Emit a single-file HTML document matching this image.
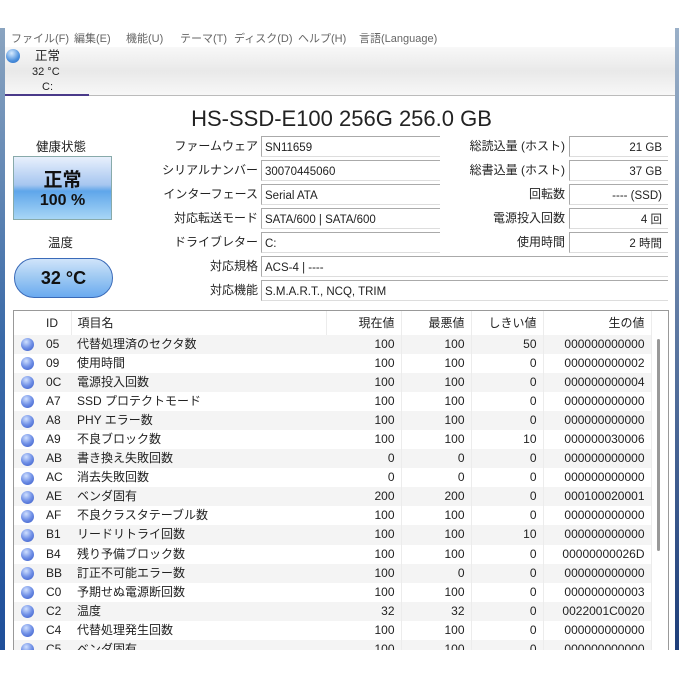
<!DOCTYPE html>
<html><head><meta charset="utf-8"><style>
*{margin:0;padding:0;box-sizing:border-box}
body{width:679px;height:679px;background:#fff;position:relative;overflow:hidden;font-family:"Liberation Sans","Noto Sans CJK JP",sans-serif;color:#222;font-size:12px}
.a{position:absolute;white-space:nowrap;line-height:14px}
.menu{top:32px;font-size:11px;color:#666}
.lbl{text-align:right;font-size:12px}
.box{position:absolute;height:21px;border-top:1px solid #aaa;border-left:1px solid #aaa;border-bottom:1px solid #ddd;font-size:11.5px;line-height:20px;padding:1px 3px 0}
.r{text-align:right;padding-right:6px}
table{border-collapse:collapse;font-size:12px;table-layout:fixed}
td{height:19.05px;padding:0 6px;white-space:nowrap;overflow:hidden;line-height:19px}
tr:nth-child(even) td{background:#f4f4f4}
td.n{text-align:right;border-right:1px solid #ececec}
.dot{width:13px;height:13px;border-radius:50%;background:radial-gradient(circle at 40% 30%,#cfe0ff 0,#6f8fe6 50%,#3556c4 100%);display:inline-block;margin-left:1px;vertical-align:middle}
</style></head><body>
<div class="a" style="left:0;top:28px;width:5px;height:622px;background:linear-gradient(#8aa4c0,#3a6aa8,#1f4f9a)"></div>
<div class="a" style="left:675px;top:28px;width:4px;height:622px;background:linear-gradient(#9ab0c8,#1e3e7a)"></div>
<div class="a menu" style="left:11px">ファイル(F)</div>
<div class="a menu" style="left:74px">編集(E)</div>
<div class="a menu" style="left:126px">機能(U)</div>
<div class="a menu" style="left:180px">テーマ(T)</div>
<div class="a menu" style="left:234px">ディスク(D)</div>
<div class="a menu" style="left:298px">ヘルプ(H)</div>
<div class="a menu" style="left:359px">言語(Language)</div>
<div class="a" style="left:5px;top:47px;width:670px;height:48px;background:linear-gradient(#f8f8f8,#e9e9e9 50%,#f7f7f7)"></div>
<div class="a" style="left:5px;top:95px;width:670px;height:1px;background:#bbb"></div>
<div class="a" style="left:5px;top:94px;width:84px;height:2px;background:#4a3a8a"></div>
<div class="a" style="left:6px;top:49px;width:14px;height:14px;border-radius:50%;background:radial-gradient(circle at 40% 30%,#d8ecff,#4b8fdc 60%,#2a6ac0)"></div>
<div class="a" style="left:35px;top:49px;font-size:12.5px">正常</div>
<div class="a" style="left:32px;top:65px;font-size:11px">32 °C</div>
<div class="a" style="left:42px;top:80px;font-size:11px">C:</div>
<div class="a" style="left:0;width:679px;top:107px;line-height:24px;text-align:center;font-size:22px;padding-left:4px">HS-SSD-E100 256G 256.0 GB</div>
<div class="a" style="left:36px;top:140px;font-size:12.5px">健康状態</div>
<div class="a" style="left:13px;top:156px;width:99px;height:64px;border:1px solid #8aa;background:linear-gradient(#e8f0fc,#a6c6f0 45%,#5fa6ea 55%,#a8d6f6);text-align:center;font-weight:bold;color:#111;line-height:normal"><div style="font-size:19px;margin-top:8px">正常</div><div style="font-size:16px">100 %</div></div>
<div class="a" style="left:48px;top:236px;font-size:12.5px">温度</div>
<div class="a" style="left:14px;top:258px;width:99px;height:40px;border:1px solid #3a6ab8;border-radius:20px;background:linear-gradient(#d0e4fa,#9cc8f2 50%,#6aaaf0);text-align:center;font-weight:bold;font-size:18px;line-height:38px;color:#111">32 °C</div>
<div class="a lbl" style="right:421px;top:139px">ファームウェア</div>
<div class="a lbl" style="right:421px;top:163px">シリアルナンバー</div>
<div class="a lbl" style="right:421px;top:187px">インターフェース</div>
<div class="a lbl" style="right:421px;top:211px">対応転送モード</div>
<div class="a lbl" style="right:421px;top:235px">ドライブレター</div>
<div class="a lbl" style="right:421px;top:259px">対応規格</div>
<div class="a lbl" style="right:421px;top:283px">対応機能</div>
<div class="box" style="left:261px;top:136px;width:179px">SN11659</div>
<div class="box" style="left:261px;top:160px;width:179px">30070445060</div>
<div class="box" style="left:261px;top:184px;width:179px">Serial ATA</div>
<div class="box" style="left:261px;top:208px;width:179px">SATA/600 | SATA/600</div>
<div class="box" style="left:261px;top:232px;width:179px">C:</div>
<div class="box" style="left:261px;top:256px;width:407px">ACS-4 | ----</div>
<div class="box" style="left:261px;top:280px;width:407px">S.M.A.R.T., NCQ, TRIM</div>
<div class="a lbl" style="right:114px;top:139px">総読込量 (ホスト)</div>
<div class="a lbl" style="right:114px;top:163px">総書込量 (ホスト)</div>
<div class="a lbl" style="right:114px;top:187px">回転数</div>
<div class="a lbl" style="right:114px;top:211px">電源投入回数</div>
<div class="a lbl" style="right:114px;top:235px">使用時間</div>
<div class="box r" style="left:569px;top:136px;width:99px">21 GB</div>
<div class="box r" style="left:569px;top:160px;width:99px">37 GB</div>
<div class="box r" style="left:569px;top:184px;width:99px">---- (SSD)</div>
<div class="box r" style="left:569px;top:208px;width:99px">4 回</div>
<div class="box r" style="left:569px;top:232px;width:99px">2 時間</div>
<div class="a" style="left:13px;top:310px;width:656px;height:340px;border:1px solid #999;border-bottom:none;overflow:hidden;background:#fff">
<table style="width:637px">
<colgroup><col style="width:26px"><col style="width:31px"><col style="width:255px"><col style="width:75px"><col style="width:70px"><col style="width:72px"><col style="width:108px"></colgroup>
<tr style="height:24px"><td></td><td style="border-right:1px solid #ececec">ID</td><td style="border-right:1px solid #ececec">項目名</td><td class="n">現在値</td><td class="n">最悪値</td><td class="n">しきい値</td><td class="n">生の値</td></tr>
<tr><td><span class="dot"></span></td><td>05</td><td>代替処理済のセクタ数</td><td class="n">100</td><td class="n">100</td><td class="n">50</td><td class="n">000000000000</td></tr>
<tr><td><span class="dot"></span></td><td>09</td><td>使用時間</td><td class="n">100</td><td class="n">100</td><td class="n">0</td><td class="n">000000000002</td></tr>
<tr><td><span class="dot"></span></td><td>0C</td><td>電源投入回数</td><td class="n">100</td><td class="n">100</td><td class="n">0</td><td class="n">000000000004</td></tr>
<tr><td><span class="dot"></span></td><td>A7</td><td>SSD プロテクトモード</td><td class="n">100</td><td class="n">100</td><td class="n">0</td><td class="n">000000000000</td></tr>
<tr><td><span class="dot"></span></td><td>A8</td><td>PHY エラー数</td><td class="n">100</td><td class="n">100</td><td class="n">0</td><td class="n">000000000000</td></tr>
<tr><td><span class="dot"></span></td><td>A9</td><td>不良ブロック数</td><td class="n">100</td><td class="n">100</td><td class="n">10</td><td class="n">000000030006</td></tr>
<tr><td><span class="dot"></span></td><td>AB</td><td>書き換え失敗回数</td><td class="n">0</td><td class="n">0</td><td class="n">0</td><td class="n">000000000000</td></tr>
<tr><td><span class="dot"></span></td><td>AC</td><td>消去失敗回数</td><td class="n">0</td><td class="n">0</td><td class="n">0</td><td class="n">000000000000</td></tr>
<tr><td><span class="dot"></span></td><td>AE</td><td>ベンダ固有</td><td class="n">200</td><td class="n">200</td><td class="n">0</td><td class="n">000100020001</td></tr>
<tr><td><span class="dot"></span></td><td>AF</td><td>不良クラスタテーブル数</td><td class="n">100</td><td class="n">100</td><td class="n">0</td><td class="n">000000000000</td></tr>
<tr><td><span class="dot"></span></td><td>B1</td><td>リードリトライ回数</td><td class="n">100</td><td class="n">100</td><td class="n">10</td><td class="n">000000000000</td></tr>
<tr><td><span class="dot"></span></td><td>B4</td><td>残り予備ブロック数</td><td class="n">100</td><td class="n">100</td><td class="n">0</td><td class="n">00000000026D</td></tr>
<tr><td><span class="dot"></span></td><td>BB</td><td>訂正不可能エラー数</td><td class="n">100</td><td class="n">0</td><td class="n">0</td><td class="n">000000000000</td></tr>
<tr><td><span class="dot"></span></td><td>C0</td><td>予期せぬ電源断回数</td><td class="n">100</td><td class="n">100</td><td class="n">0</td><td class="n">000000000003</td></tr>
<tr><td><span class="dot"></span></td><td>C2</td><td>温度</td><td class="n">32</td><td class="n">32</td><td class="n">0</td><td class="n">0022001C0020</td></tr>
<tr><td><span class="dot"></span></td><td>C4</td><td>代替処理発生回数</td><td class="n">100</td><td class="n">100</td><td class="n">0</td><td class="n">000000000000</td></tr>
<tr><td><span class="dot"></span></td><td>C5</td><td>ベンダ固有</td><td class="n">100</td><td class="n">100</td><td class="n">0</td><td class="n">000000000000</td></tr>
</table>
<div class="a" style="left:643px;top:28px;width:3px;height:212px;background:#999;border-radius:2px"></div>
</div>
<div class="a" style="left:0;top:650px;width:679px;height:29px;background:#fff"></div>
</body></html>
